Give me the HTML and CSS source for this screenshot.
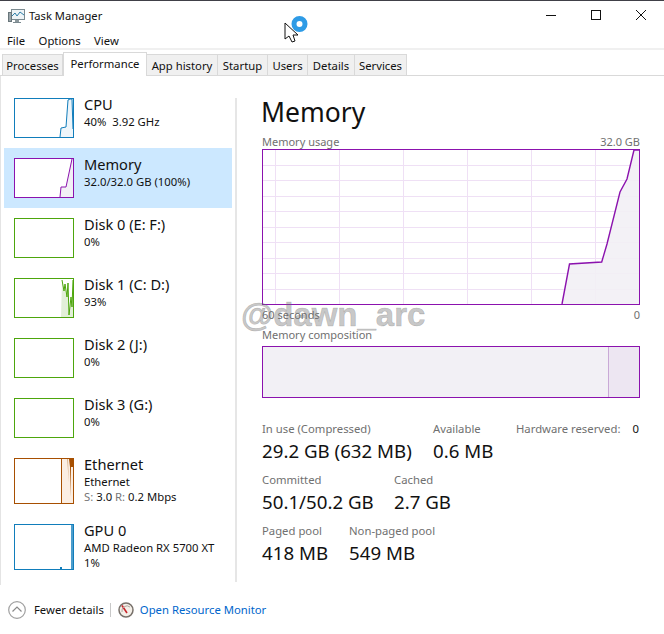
FILE: index.html
```html
<!DOCTYPE html>
<html lang="en">
<head>
    <meta charset="UTF-8">
    <title>Task Manager</title>
    <link rel="stylesheet" href="styles.css">
</head>
<body>
    <div class="titlebar">
        <svg class="app-icon" width="17" height="16" viewBox="0 0 17 16">
            <rect x="3.5" y="1.5" width="13" height="10" fill="#eef3f6" stroke="#7b8a90"/>
            <polyline points="4,8 7,5 9,8 12,4 16,7" fill="none" stroke="#2f7fa8" stroke-width="1"/>
            <rect x="0.5" y="4.5" width="3" height="9" fill="#9aa5aa" stroke="#69767b"/>
            <rect x="7" y="12" width="4" height="2" fill="#8b979c"/>
            <rect x="5" y="14" width="8" height="1" fill="#7b8a90"/>
        </svg>
        <span class="app-title">Task Manager</span>
        <div class="window-buttons">
            <svg width="10" height="10" viewBox="0 0 10 10"><path d="M0 5.5H10" stroke="#111" fill="none"/></svg>
            <svg width="10" height="10" viewBox="0 0 10 10"><rect x="0.5" y="0.5" width="9" height="9" stroke="#111" fill="none"/></svg>
            <svg width="10" height="10" viewBox="0 0 10 10"><path d="M0 0L10 10M10 0L0 10" stroke="#111" fill="none"/></svg>
        </div>
    </div>
    <div class="menubar">
        <span>File</span>
        <span>Options</span>
        <span>View</span>
    </div>
    <div class="tabs">
        <div class="tab tab-processes">Processes</div>
        <div class="tab tab-active">Performance</div>
        <div class="tab tab-history">App history</div>
        <div class="tab tab-startup">Startup</div>
        <div class="tab tab-users">Users</div>
        <div class="tab tab-details">Details</div>
        <div class="tab tab-services">Services</div>
    </div>

    <div class="main">
        <div class="sidebar">
            <div class="item">
                <svg class="thumb cpu" viewBox="0 0 58 38">
                    <polygon points="45,38 46,29 51,28 53,1 55,0 57,0 58,30 58,38" fill="#eef5fa"/>
                    <polyline points="45,38 46,29 51,28 53,1 55,0 57,0 58,30" fill="none" stroke="#117dbb"/>
                </svg>
                <div class="item-text">
                    <div class="item-name">CPU</div>
                    <div class="item-sub">40%&nbsp; 3.92 GHz</div>
                </div>
            </div>
            <div class="item item-selected">
                <svg class="thumb mem" viewBox="0 0 58 38">
                    <polygon points="45,38 46,28 51,28 57,0 58,0 58,38" fill="#f2f0f5"/>
                    <polyline points="45,38 46,28 51,28 57,0" fill="none" stroke="#8b12ae"/>
                </svg>
                <div class="item-text">
                    <div class="item-name">Memory</div>
                    <div class="item-sub">32.0/32.0 GB (100%)</div>
                </div>
            </div>
            <div class="item">
                <svg class="thumb disk" viewBox="0 0 58 38"></svg>
                <div class="item-text">
                    <div class="item-name">Disk 0 (E: F:)</div>
                    <div class="item-sub">0%</div>
                </div>
            </div>
            <div class="item">
                <svg class="thumb disk" viewBox="0 0 58 38">
                    <polygon points="46,38 47,1 49,12 50,5 52,18 53,4 54,36 56,18 57,28 58,1 58,38" fill="#e2efd8"/>
                    <polyline points="47,1 49,12 50,5 52,18 53,4 54,36 56,18 57,28 58,1" fill="none" stroke="#4da60c"/>
                </svg>
                <div class="item-text">
                    <div class="item-name">Disk 1 (C: D:)</div>
                    <div class="item-sub">93%</div>
                </div>
            </div>
            <div class="item">
                <svg class="thumb disk" viewBox="0 0 58 38"></svg>
                <div class="item-text">
                    <div class="item-name">Disk 2 (J:)</div>
                    <div class="item-sub">0%</div>
                </div>
            </div>
            <div class="item">
                <svg class="thumb disk" viewBox="0 0 58 38"></svg>
                <div class="item-text">
                    <div class="item-name">Disk 3 (G:)</div>
                    <div class="item-sub">0%</div>
                </div>
            </div>
            <div class="item item-tall">
                <svg class="thumb net" viewBox="0 0 58 44">
                    <rect x="46" y="0" width="12" height="44" fill="#fbeee3"/>
                    <path d="M46.5 0V44" fill="none" stroke="#a74f01"/>
                    <polygon points="52,0 54,24 53,0" fill="#dcb48e"/>
                    <polygon points="54,0 58,0 58,8 56,8 55.5,38 55,8" fill="#a74f01"/>
                </svg>
                <div class="item-text">
                    <div class="item-name">Ethernet</div>
                    <div class="item-sub">Ethernet</div>
                    <div class="item-sub"><span class="dim">S:</span> 3.0 <span class="dim">R:</span> 0.2 Mbps</div>
                </div>
            </div>
            <div class="item item-tall">
                <svg class="thumb gpu" viewBox="0 0 58 44">
                    <path d="M57 44V0" fill="none" stroke="#117dbb" stroke-width="1.5"/>
                    <rect x="45" y="42" width="2" height="2" fill="#117dbb"/>
                </svg>
                <div class="item-text">
                    <div class="item-name">GPU 0</div>
                    <div class="item-sub">AMD Radeon RX 5700 XT</div>
                    <div class="item-sub">1%</div>
                </div>
            </div>
        </div>
        <div class="divider"></div>

        <div class="detail">
            <h1>Memory</h1>
            <div class="graph-caption">
                <span>Memory usage</span>
                <span>32.0 GB</span>
            </div>
            <svg class="usage-graph" width="378" height="156" viewBox="0 0 378 156">
                <path class="grid" d="M0 16.5H378M0 31.5H378M0 47.5H378M0 62.5H378M0 78.5H378M0 93.5H378M0 109.5H378M0 124.5H378M0 140.5H378M13.5 0V156M77.5 0V156M141.5 0V156M205.5 0V156M269.5 0V156M333.5 0V156"/>
                <polygon class="area" points="300,155 307.5,115 339.7,113 345,95 358,43 365,30 372,1 378,1 378,155"/>
                <polyline class="curve" points="300,155 307.5,115 339.7,113 345,95 358,43 365,30 372,1 378,1"/>
                <rect class="frame" x="0.5" y="0.5" width="377" height="155"/>
            </svg>
            <div class="graph-caption graph-foot">
                <span>60 seconds</span>
                <span>0</span>
            </div>
            <div class="graph-caption comp-caption">Memory composition</div>
            <div class="composition">
                <div class="comp-used"></div>
                <div class="comp-rest"></div>
            </div>
            <div class="stats">
                <div class="stat-row">
                    <div class="stat stat-inuse">
                        <div class="stat-label">In use (Compressed)</div>
                        <div class="stat-value">29.2 GB (632 MB)</div>
                    </div>
                    <div class="stat stat-avail">
                        <div class="stat-label">Available</div>
                        <div class="stat-value">0.6 MB</div>
                    </div>
                    <div class="stat-label hw">Hardware reserved:<span class="hw-value">0</span></div>
                </div>
                <div class="stat-row">
                    <div class="stat stat-committed">
                        <div class="stat-label">Committed</div>
                        <div class="stat-value">50.1/50.2 GB</div>
                    </div>
                    <div class="stat">
                        <div class="stat-label">Cached</div>
                        <div class="stat-value">2.7 GB</div>
                    </div>
                </div>
                <div class="stat-row">
                    <div class="stat stat-paged">
                        <div class="stat-label">Paged pool</div>
                        <div class="stat-value">418 MB</div>
                    </div>
                    <div class="stat">
                        <div class="stat-label">Non-paged pool</div>
                        <div class="stat-value">549 MB</div>
                    </div>
                </div>
            </div>
        </div>
    </div>

    <div class="footer">
        <svg class="fewer-icon" width="18" height="18" viewBox="0 0 18 18">
            <circle cx="9" cy="9" r="8.3" fill="#fff" stroke="#a0a0a0" stroke-width="1.2"/>
            <path d="M4.5 10.5L9 6L13.5 10.5" fill="none" stroke="#8a8a8a" stroke-width="1.2"/>
        </svg>
        <span class="fewer-text">Fewer details</span>
        <span class="footer-sep"></span>
        <svg class="monitor-icon" width="16" height="16" viewBox="0 0 16 16">
            <circle cx="8" cy="8" r="7" fill="#f4efe8" stroke="#77706a" stroke-width="1.5"/>
            <path d="M4 3.5L9 11" stroke="#c8242b" stroke-width="1.6" fill="none"/>
            <path d="M4 10A5 5 0 0 1 12 5" stroke="#b0a8a0" fill="none"/>
        </svg>
        <span class="link">Open Resource Monitor</span>
    </div>

    <div class="watermark">@dawn_arc</div>

    <svg class="cursor" width="26" height="30" viewBox="0 0 26 30">
        <circle cx="16.5" cy="9" r="5.5" fill="none" stroke="#2e9be6" stroke-width="5"/>
        <path d="M2 8V24L6 21L9 27L12 26L10 20L15 20Z" fill="#fff" stroke="#111"/>
    </svg>
</body>
</html>
```

FILE: styles.css
```css
* {
    box-sizing: border-box;
}

html, body {
    margin: 0;
    height: 100%;
}

body {
    position: relative;
    width: 664px;
    height: 634px;
    overflow: hidden;
    background-color: #fff;
    color: #111;
    font-family: "Noto Sans", "Open Sans", sans-serif;
    font-size: 11.3px;
}

.titlebar {
    display: flex;
    align-items: center;
    height: 31px;
    padding-left: 8px;
    border-top: 1px solid #404048;
}

.app-title {
    margin-left: 4px;
    margin-bottom: 2px;
    font-size: 11.2px;
}

.window-buttons {
    display: flex;
    gap: 35px;
    margin-left: auto;
    margin-right: 18px;
    margin-bottom: 2px;
}

.window-buttons svg {
    display: block;
}

.menubar {
    display: flex;
    gap: 13.5px;
    height: 19px;
    padding-left: 7px;
    line-height: 19px;
    border-bottom: 2px solid #f0f0f0;
}

.tabs {
    display: flex;
    align-items: flex-end;
    height: 26px;
    padding-left: 2px;
    border-bottom: 1px solid #d9d9d9;
}

.tab {
    height: 21px;
    text-align: center;
    line-height: 21px;
    background-color: #f0f0f0;
    border: 1px solid #d9d9d9;
    border-bottom: 0;
    border-left: 0;
}

.tab-processes { width: 61px; border-left: 1px solid #d9d9d9; }
.tab-active {
    width: 84px;
    height: 24px;
    margin-bottom: -1px;
    line-height: 21px;
    background-color: #fff;
    border-left: 1px solid #d9d9d9;
}
.tab-history { width: 71px; }
.tab-startup { width: 50px; }
.tab-users { width: 40px; }
.tab-details { width: 47px; }
.tab-services { width: 52px; }

.main {
    display: flex;
    height: 509px;
    border-left: 1px solid #e4e4e4;
}

.sidebar {
    width: 234px;
    padding-top: 12px;
    padding-left: 3px;
}

.divider {
    width: 2px;
    height: 484px;
    margin-top: 22px;
    background-color: #e6e6e6;
}

.item {
    display: flex;
    width: 228px;
    height: 60px;
    padding: 10px 0 0 10px;
}

.item-tall {
    height: 66px;
}

.item-selected {
    background-color: #cce8ff;
}

.thumb {
    flex: none;
    width: 60px;
    height: 40px;
    background-color: #fff;
    border-style: solid;
    border-width: 1px;
    overflow: hidden;
}

.item-tall .thumb {
    height: 46px;
}

.cpu, .gpu { border-color: #117dbb; }
.mem { border-color: #8b12ae; }
.disk { border-color: #4da60c; }
.net { border-color: #a74f01; }

.item-text {
    margin-left: 10px;
}

.item-name {
    margin-top: -3px;
    font-size: 14.6px;
    line-height: 19px;
}

.item-sub {
    font-size: 11.3px;
    line-height: 15px;
}

.dim {
    color: #777;
}

.detail {
    flex: 1;
    padding: 18px 0 0 25px;
}

h1 {
    margin: 0 0 0 -1px;
    font-size: 26.5px;
    font-weight: 400;
    line-height: 37px;
}

.graph-caption {
    display: flex;
    justify-content: space-between;
    width: 378px;
    height: 15px;
    margin-top: 3px;
    font-size: 11px;
    line-height: 15px;
    color: #707070;
}

.usage-graph {
    display: block;
}

.grid {
    fill: none;
    stroke: #efe0f5;
}

.area {
    fill: #f2f0f5;
    fill-opacity: 0.9;
}

.curve {
    fill: none;
    stroke: #8b12ae;
    stroke-width: 1.4;
}

.frame {
    fill: none;
    stroke: #8b12ae;
}

.graph-foot {
    margin-top: 2px;
}

.comp-caption {
    margin-top: 5px;
}

.composition {
    display: flex;
    width: 378px;
    height: 52px;
    margin-top: 4px;
    border: 1px solid #8b12ae;
}

.comp-used {
    width: 346px;
    background-color: #f2f0f5;
    border-right: 1px solid #c9a9d6;
}

.comp-rest {
    flex: 1;
    background-color: #ede6f2;
}

.stats {
    margin-top: 23px;
    width: 378px;
}

.stat-row {
    display: flex;
    height: 51px;
}

.stat-label {
    font-size: 11.3px;
    line-height: 15px;
    color: #707070;
}

.stat-value {
    margin-top: 3px;
    font-size: 18.7px;
    line-height: 24px;
    color: #111;
}

.stat-inuse { width: 171px; }
.stat-avail { width: 83px; }
.stat-committed { width: 132px; }
.stat-paged { width: 87px; }

.hw-value {
    margin-left: 12px;
    color: #111;
}

.footer {
    display: flex;
    align-items: center;
    height: 49px;
    padding-left: 8px;
}

.fewer-text {
    margin-left: 8px;
}

.footer-sep {
    width: 1px;
    height: 14px;
    margin: 0 7px 0 6px;
    background-color: #c8c8c8;
}

.link {
    margin-left: 6px;
    color: #0066cc;
}

.watermark {
    position: absolute;
    left: 241px;
    top: 296px;
    font-family: "Liberation Sans", Arial, sans-serif;
    font-size: 33px;
    font-weight: 700;
    color: rgba(110, 110, 110, 0.38);
    -webkit-text-stroke: 0.6px rgba(110, 110, 110, 0.38);
}

.cursor {
    position: absolute;
    left: 283px;
    top: 15px;
}
```
